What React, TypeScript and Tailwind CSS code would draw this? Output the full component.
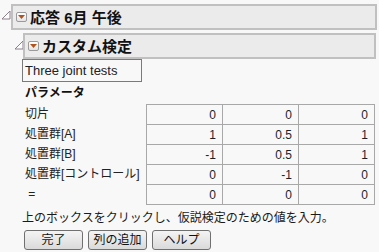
import React from 'react';

const JP = "font-['Liberation_Sans','Noto_Sans_CJK_JP',sans-serif]";

const ROWS: { label: string; values: string[] }[] = [
  { label: '切片', values: ['0', '0', '0'] },
  { label: '処置群[A]', values: ['1', '0.5', '1'] },
  { label: '処置群[B]', values: ['-1', '0.5', '1'] },
  { label: '処置群[コントロール]', values: ['0', '-1', '0'] },
  { label: ' =', values: ['0', '0', '0'] },
];

function Disclosure() {
  return (
    <svg width="10" height="10" viewBox="0 0 10 10" className="shrink-0">
      <polygon points="1,9 9,1 9,9" fill="#ffffff" stroke="#8c7f8c" strokeWidth="1" />
    </svg>
  );
}

function MenuButton() {
  return (
    <div className="w-[11px] h-[10px] shrink-0 rounded-[2px] border border-[#9a9a9a] bg-gradient-to-b from-white to-[#e4e4e4] flex items-center justify-center">
      <svg width="7" height="4" viewBox="0 0 7 4">
        <polygon points="0,0 7,0 3.5,4" fill="#b4521c" />
      </svg>
    </div>
  );
}

function Header({ title }: { title: string }) {
  return (
    <div className="flex-1 h-[26px] border-2 border-[#c0c0c0] bg-[#ebebeb] flex items-center gap-[3px] pl-[3px]">
      <MenuButton />
      <span className="text-[15px] font-bold text-[#111] leading-none">{title}</span>
    </div>
  );
}

function Btn({ label }: { label: string }) {
  return (
    <button className="w-[59px] h-[20px] rounded-[3px] border border-[#707070] bg-gradient-to-b from-[#f4f4f4] to-[#dadada] text-[12px] text-[#111] leading-none flex items-center justify-center">
      {label}
    </button>
  );
}

export default function App() {
  return (
    <div className={`${JP} w-[379px] h-[252px] bg-[#f8f8f8] pt-[4px] overflow-hidden text-[#1a1a1a]`}>
      <div className="flex items-end pr-[2px]">
        <div className="w-[11px] pl-[1px] pb-[10px]"><Disclosure /></div>
        <Header title="応答 6月 午後" />
      </div>

      <div className="pl-[14px] pt-[3px]">
        <div className="flex items-end pr-[3px]">
          <div className="w-[9px] pb-[9px]"><Disclosure /></div>
          <Header title="カスタム検定" />
        </div>
      </div>

      <div className="pl-[22px]">
        <div className="w-[120px] h-[23px] border border-[#7a7a7a] bg-[#f8f8f8] flex items-center pl-[2px] text-[13px] text-[#222]">
          Three joint tests
        </div>

        <div className="pl-[3px] h-[22px] flex items-center text-[12px] font-bold text-[#111]">パラメータ</div>

        <div className="flex">
          <div className="w-[124px] pl-[3px] text-[12px] text-[#222]">
            {ROWS.map(r => (
              <div key={r.label} className="h-[20px] flex items-center whitespace-pre">{r.label}</div>
            ))}
          </div>
          <div className="border-t border-l border-[#a8a8a8]">
            {ROWS.map(r => (
              <div key={r.label} className="flex">
                {r.values.map((v, i) => (
                  <div key={i} className="w-[76px] h-[20px] border-r border-b border-[#a8a8a8] flex items-center justify-end pr-[6px] text-[12px] text-[#1b1f2a]">
                    {v}
                  </div>
                ))}
              </div>
            ))}
          </div>
        </div>

        <div className="h-[23px] flex items-center pt-[2px] text-[12px] text-[#1a1a1a]">
          上のボックスをクリックし、仮説検定のための値を入力。
        </div>

        <div className="flex gap-[5px] pl-[2px] pt-[2px]">
          <Btn label="完了" />
          <Btn label="列の追加" />
          <Btn label="ヘルプ" />
        </div>
      </div>
    </div>
  );
}
